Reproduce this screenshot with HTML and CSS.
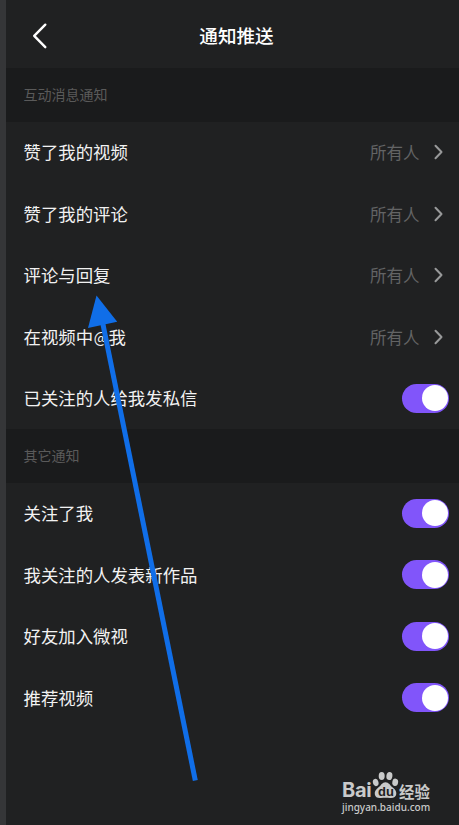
FILE: index.html
```
<!DOCTYPE html>
<html lang="zh-CN">
<head>
  <meta charset="utf-8">
  <meta name="viewport" content="width=device-width, initial-scale=1">
  <title>通知推送</title>
  <link rel="stylesheet" href="styles.css">
</head>
<body>
  <div class="page">
    <header class="header">
      <svg class="back" viewBox="0 0 16 26" aria-hidden="true"><path d="M13.3 1.7 2.2 12.9 13.3 24.2"/></svg>
      <h1 class="title">通知推送</h1>
    </header>

    <main>
      <h2 class="section-title">互动消息通知</h2>
      <ul class="list">
        <li class="row">
          <span class="label">赞了我的视频</span>
          <span class="value">所有人</span>
          <svg class="chevron" viewBox="0 0 9 16" aria-hidden="true"><path d="M1.5 1.7 7.5 8 1.5 14.3"/></svg>
        </li>
        <li class="row">
          <span class="label">赞了我的评论</span>
          <span class="value">所有人</span>
          <svg class="chevron" viewBox="0 0 9 16" aria-hidden="true"><path d="M1.5 1.7 7.5 8 1.5 14.3"/></svg>
        </li>
        <li class="row">
          <span class="label">评论与回复</span>
          <span class="value">所有人</span>
          <svg class="chevron" viewBox="0 0 9 16" aria-hidden="true"><path d="M1.5 1.7 7.5 8 1.5 14.3"/></svg>
        </li>
        <li class="row">
          <span class="label">在视频中<span class="at">@</span>我</span>
          <span class="value">所有人</span>
          <svg class="chevron" viewBox="0 0 9 16" aria-hidden="true"><path d="M1.5 1.7 7.5 8 1.5 14.3"/></svg>
        </li>
        <li class="row">
          <span class="label">已关注的人给我发私信</span>
          <span class="switch"><span class="knob"></span></span>
        </li>
      </ul>

      <h2 class="section-title">其它通知</h2>
      <ul class="list">
        <li class="row">
          <span class="label">关注了我</span>
          <span class="switch"><span class="knob"></span></span>
        </li>
        <li class="row">
          <span class="label">我关注的人发表新作品</span>
          <span class="switch"><span class="knob"></span></span>
        </li>
        <li class="row">
          <span class="label">好友加入微视</span>
          <span class="switch"><span class="knob"></span></span>
        </li>
        <li class="row">
          <span class="label">推荐视频</span>
          <span class="switch"><span class="knob"></span></span>
        </li>
      </ul>
    </main>
  </div>

  <!-- Pointer to 评论与回复 -->
  <svg class="arrow" viewBox="0 0 459 825" aria-hidden="true">
    <path class="arrow-line" d="M102.5 322 195.3 780.5"/>
    <path class="arrow-head" d="M96.5 295.5 117.2 321.7 88 328Z"/>
  </svg>

  <!-- Watermark -->
  <div class="watermark">
    <div class="brand">
      <span class="brand-bai">Bai</span>
      <span class="paw">
        <svg viewBox="0 0 27 28" aria-hidden="true">
          <ellipse cx="3.7" cy="11.5" rx="2.8" ry="3.7" transform="rotate(-15 3.7 11.5)"/>
          <ellipse cx="9.7" cy="5" rx="3" ry="4.1"/>
          <ellipse cx="17.4" cy="5" rx="3" ry="4.1" transform="rotate(8 17.4 5)"/>
          <ellipse cx="23.2" cy="11.3" rx="2.9" ry="3.7" transform="rotate(10 23.2 11.3)"/>
          <path d="M13.5 11.2c-3.3 0-4.5 3.2-7.2 5.4-2.2 1.8-4 3.7-3.5 6.7.5 3.2 3.3 4.2 6.2 3.7 3.2-.5 5.8-.5 9 0 3 .5 6-.8 6.3-4 .3-2.9-1.5-4.6-3.6-6.4-2.6-2.2-3.8-5.4-7.2-5.4Z"/>
        </svg>
        <span class="du">du</span>
      </span>
      <span class="brand-jy">经验</span>
    </div>
    <div class="site">jingyan.baidu.com</div>
  </div>
</body>
</html>
```
FILE: styles.css
```
* {
  box-sizing: border-box;
}

body {
  margin: 0;
  height: 825px;
  background: #202122;
  color: #f2f2f2;
  font-family: "Noto Sans CJK SC", sans-serif;
  overflow: hidden;
}

.page {
  height: 825px;
  border-left: 6px solid #353638;
}

.header {
  display: flex;
  align-items: center;
  height: 68px;
  padding: 3px 26px 0;
}

.back {
  width: 16px;
  height: 26px;
  fill: none;
  stroke: #fff;
  stroke-width: 2.4;
  stroke-linecap: round;
  stroke-linejoin: round;
}

.title {
  flex: 1;
  margin: 0 8px 2px 0;
  font-size: 18.6px;
  font-weight: 500;
  line-height: 28px;
  text-align: center;
  color: #fff;
}

.section-title {
  margin: 0;
  height: 53.5px;
  padding-left: 17.5px;
  background: #1a1b1c;
  color: #5a5a5a;
  font-size: 14px;
  font-weight: 400;
  line-height: 53px;
}

.list {
  margin: 0;
  padding: 0;
  list-style: none;
}

.row {
  display: flex;
  align-items: center;
  height: 61.5px;
  padding: 0 10px 0 17.5px;
}

.label {
  flex: 1;
  font-size: 17.4px;
  line-height: 26px;
}

.at {
  display: inline-block;
  width: 15.5px;
  font-size: 15px;
  line-height: 1;
  text-align: center;
  vertical-align: 1px;
}

.value {
  color: #636465;
  font-size: 16.5px;
  line-height: 26px;
}

.chevron {
  width: 9px;
  height: 16px;
  margin: 0 6px 0 14.5px;
  fill: none;
  stroke: #98999a;
  stroke-width: 2;
  stroke-linecap: round;
  stroke-linejoin: round;
}

.switch {
  display: flex;
  justify-content: flex-end;
  width: 47px;
  height: 29px;
  padding: 1.5px;
  border-radius: 15px;
  background: #8155fa;
}

.knob {
  width: 26px;
  height: 26px;
  border-radius: 50%;
  background: #fff;
}

.arrow {
  position: absolute;
  top: 0;
  left: 0;
  width: 459px;
  height: 825px;
}

.arrow-line {
  fill: none;
  stroke: #106ee8;
  stroke-width: 5;
}

.arrow-head {
  fill: #106ee8;
}

.watermark {
  position: absolute;
  left: 342px;
  top: 771px;
  width: 90px;
  color: #c9caca;
  font-family: "Liberation Sans", "Noto Sans CJK SC", sans-serif;
}

.brand {
  display: flex;
  height: 28px;
  align-items: flex-end;
}

.brand-bai {
  width: 30px;
  padding-top: 2px;
  font-family: Inter, sans-serif;
  font-size: 20px;
  font-weight: 700;
  letter-spacing: -0.3px;
  line-height: 18px;
}

.paw {
  position: relative;
  width: 27px;
  height: 28px;
}

.paw svg {
  display: block;
  width: 27px;
  height: 28px;
  fill: #c9caca;
}

.du {
  position: absolute;
  left: 6px;
  bottom: 0;
  color: #202122;
  font-size: 13px;
  font-weight: 700;
  line-height: 14px;
}

.brand-jy {
  padding-top: 2px;
  font-family: "Noto Sans CJK SC", sans-serif;
  font-size: 15.4px;
  font-weight: 700;
  line-height: 16px;
}

.site {
  margin-top: 1px;
  font-family: "Noto Sans", sans-serif;
  font-size: 10px;
  font-weight: 500;
  line-height: 14px;
  white-space: nowrap;
}
```
